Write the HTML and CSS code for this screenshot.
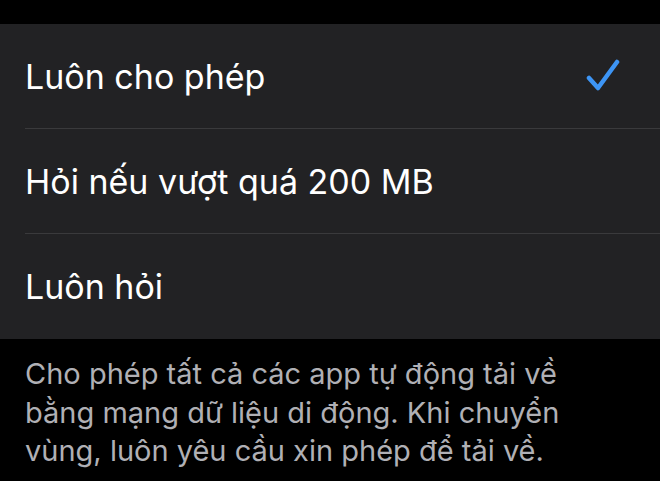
FILE: index.html
```html
<html>
    <head>
        <link rel="stylesheet" href="styles.css">
    </head>
    <body>
        <div class="top"></div>
        <div class="group">
            <div class="row">
                <div class="label">Luôn cho phép</div>
                <svg class="check" width="34" height="34" viewBox="0 0 34 34">
                    <path d="M3 20 L12 30 L31 4" fill="none" stroke="#3d95f5" stroke-width="4.5" stroke-linecap="round" stroke-linejoin="round"/>
                </svg>
            </div>
            <div class="row">
                <div class="label">Hỏi nếu vượt quá 200 MB</div>
            </div>
            <div class="row">
                <div class="label">Luôn hỏi</div>
            </div>
        </div>
        <div class="footer">
            Cho phép tất cả các app tự động tải về bằng mạng dữ liệu di động. Khi chuyển vùng, luôn yêu cầu xin phép để tải về.
        </div>
    </body>
</html>
```

FILE: styles.css
```css
body {
    margin: 0;
    background: #000;
    font-family: Inter, "Noto Sans", sans-serif;
    color: #fff;
}

.top {
    height: 24px;
}

.group {
    background: #222224;
    padding-left: 25px;
}

.row {
    height: 105px;
    display: flex;
    align-items: center;
    justify-content: space-between;
    padding-right: 40px;
    border-bottom: 1px solid #3a3a3c;
    box-sizing: border-box;
}

.row:last-child {
    border-bottom: none;
}

.label {
    font-size: 34px;
}

.check {
    margin-top: -2px;
}

.footer {
    padding: 16px 40px 0 25px;
    font-size: 29px;
    line-height: 38.5px;
    color: #b0b0b5;
}
```
